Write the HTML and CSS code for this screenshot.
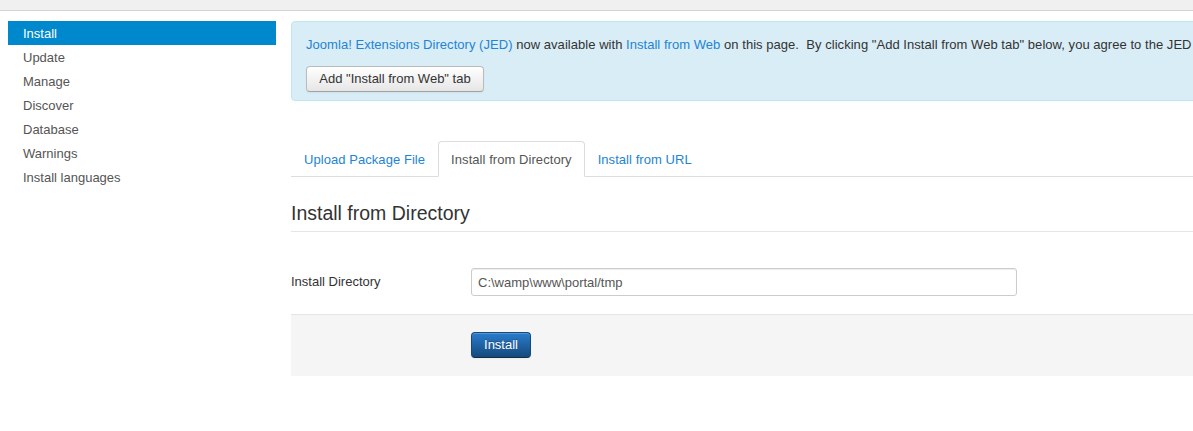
FILE: index.html
```html
<!DOCTYPE html>
<html lang="en">
<head>
<meta charset="utf-8">
<title>Extensions: Install</title>
<link rel="stylesheet" href="styles.css">
</head>
<body>
<div class="topbar"></div>
<div class="page">
  <nav class="sidebar">
    <a class="nav-item active" href="#">Install</a>
    <a class="nav-item" href="#">Update</a>
    <a class="nav-item" href="#">Manage</a>
    <a class="nav-item" href="#">Discover</a>
    <a class="nav-item" href="#">Database</a>
    <a class="nav-item" href="#">Warnings</a>
    <a class="nav-item" href="#">Install languages</a>
  </nav>
  <main class="main">
    <div class="alert">
      <p class="alert-text"><a href="#">Joomla! Extensions Directory (JED)</a> now available with <a href="#">Install from Web</a> on this page.&nbsp; By clicking "Add Install from Web tab" below, you agree to the JED</p>
      <button class="btn" type="button">Add "Install from Web" tab</button>
    </div>
    <ul class="tabs">
      <li class="tab"><a href="#">Upload Package File</a></li>
      <li class="tab active"><a href="#">Install from Directory</a></li>
      <li class="tab"><a href="#">Install from URL</a></li>
    </ul>
    <fieldset class="panel">
      <legend class="legend">Install from Directory</legend>
      <div class="control-group">
        <label class="control-label" for="dir">Install Directory</label>
        <input class="input" id="dir" type="text" value="C:\wamp\www\portal/tmp">
      </div>
      <div class="form-actions">
        <button class="btn btn-primary" type="button">Install</button>
      </div>
    </fieldset>
  </main>
</div>
</body>
</html>
```

FILE: styles.css
```css
html, body {
  margin: 0;
  padding: 0;
  background: #fff;
  overflow: hidden;
}
body {
  font-family: "Liberation Sans", Arial, Helvetica, sans-serif;
  font-size: 13px;
  line-height: 18px;
  color: #333;
}
a {
  color: #2384d3;
  text-decoration: none;
}
.topbar {
  height: 10px;
  background: #f0f0f0;
  border-bottom: 1px solid #d4d4d4;
}
.page {
  display: flex;
  align-items: flex-start;
  gap: 15px;
  padding: 10px 0 0 8px;
  width: 1400px;
}
.sidebar {
  width: 268px;
  flex: none;
  display: flex;
  flex-direction: column;
}
.nav-item {
  display: block;
  box-sizing: border-box;
  height: 24px;
  line-height: 24px;
  padding: 1px 0 0 15px;
  color: #555;
}
.nav-item.active {
  background: #0088cc;
  color: #fff;
}
.main {
  width: 1100px;
  flex: none;
}
.alert {
  background: #d9edf7;
  border: 1px solid #bce8f1;
  border-radius: 4px;
  padding: 14px 14px 8px 14px;
}
.alert-text {
  margin: 0;
  white-space: nowrap;
  color: #333;
  letter-spacing: 0.04px;
}
.btn {
  display: inline-block;
  font-family: inherit;
  font-size: 13px;
  line-height: 18px;
  height: 26px;
  padding: 3px 12px;
  color: #333;
  background: linear-gradient(#ffffff, #e6e6e6);
  border: 1px solid #bbb;
  border-bottom-color: #a2a2a2;
  border-radius: 4px;
  box-shadow: inset 0 1px 0 rgba(255,255,255,.2), 0 1px 2px rgba(0,0,0,.05);
}
.alert .btn {
  margin-top: 12px;
  width: 178px;
}
.tabs {
  list-style: none;
  margin: 40px 0 0 0;
  padding: 0;
  display: flex;
  border-bottom: 1px solid #ddd;
}
.tab {
  margin-bottom: -1px;
}
.tab a {
  display: block;
  padding: 9px 12px 7px;
  border: 1px solid transparent;
  border-radius: 4px 4px 0 0;
  letter-spacing: 0.06px;
}
.tab.active a {
  color: #555;
  background: #fff;
  border-color: #ddd #ddd transparent;
}
.panel {
  border: 0;
  margin: 18px 0 0 0;
  padding: 0;
  min-width: 0;
}
.legend {
  display: block;
  width: 100%;
  padding: 0;
  font-size: 19.5px;
  line-height: 36px;
  color: #333;
  border-bottom: 1px solid #e5e5e5;
}
.control-group {
  display: flex;
  align-items: center;
  margin-top: 36px;
}
.control-label {
  width: 180px;
  flex: none;
}
.input {
  box-sizing: border-box;
  width: 546px;
  height: 28px;
  padding: 4px 6px;
  font-family: inherit;
  font-size: 13px;
  color: #555;
  border: 1px solid #ccc;
  border-radius: 3px;
  box-shadow: inset 0 1px 1px rgba(0,0,0,.075);
}
.form-actions {
  margin-top: 18px;
  padding: 17px 20px 18px 180px;
  background: #f5f5f5;
  border-top: 1px solid #e5e5e5;
}
.btn-primary {
  color: #fff;
  width: 60px;
  padding: 3px 0;
  text-align: center;
  background: linear-gradient(#2a7ccc, #15497c);
  border-color: #15497c #15497c #0d2e4f;
  text-shadow: 0 -1px 0 rgba(0,0,0,.25);
}
```
